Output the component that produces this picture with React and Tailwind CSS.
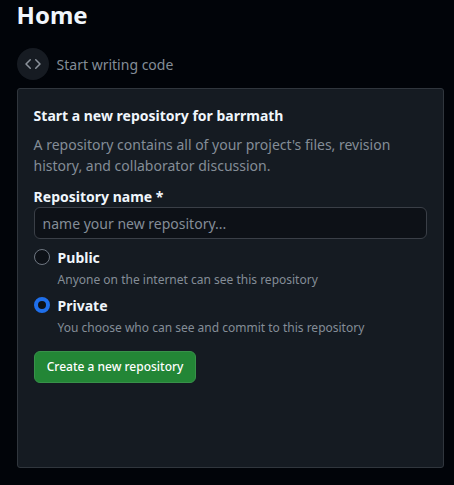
function Option({ title, note, checked }) {
  return (
    <label className="flex h-12">
      <span className={"mt-[2px] size-4 shrink-0 rounded-full bg-[#0d1117] " + (checked ? "border-[4px] border-[#1f6feb]" : "border border-[#6e7681]")} />
      <span className="ml-2 flex flex-col">
        <span className="text-[14px] leading-[21px] font-bold text-[#f0f6fc]">{title}</span>
        <span className="mt-px text-[12px] leading-[21px] text-[#848d97]">{note}</span>
      </span>
    </label>
  );
}

export default function App() {
  return (
    <main className="h-[485px] w-[454px] bg-[#010409] font-['Noto_Sans',sans-serif]">
      <h1 className="h-12 pl-[16.6px] text-[24px] leading-[30px] font-bold text-[#f0f6fc]">Home</h1>
      <div className="flex h-8 items-center pl-[16.6px]">
        <span className="flex size-8 items-center justify-center rounded-full bg-[#161b22] text-[#8b929b]">
          <svg width="16" height="16" viewBox="0 0 16 16" fill="currentColor">
            <path d="m11.28 3.22 4.25 4.25a.75.75 0 0 1 0 1.06l-4.25 4.25a.749.749 0 0 1-1.06-1.06L13.94 8l-3.72-3.72a.749.749 0 0 1 1.06-1.06Zm-6.56 0a.751.751 0 0 1 1.06 1.06L2.06 8l3.72 3.72a.749.749 0 0 1-1.06 1.06L.47 8.53a.75.75 0 0 1 0-1.06Z" />
          </svg>
        </span>
        <span className="ml-2 text-[14px] leading-[21px] text-[#848d97]">Start writing code</span>
      </div>
      <section className="mt-2 ml-[16.6px] flex h-[380px] w-[427px] flex-col rounded-[3px] border border-[#30363d] bg-[#151b22] px-4 pt-4">
        <h2 className="text-[14px] leading-[21px] font-bold text-[#f0f6fc]">Start a new repository for barrmath</h2>
        <p className="mt-2 text-[14px] leading-[21px] whitespace-nowrap text-[#848d97]">A repository contains all of your project's files, revision<br />history, and collaborator discussion.</p>
        <div className="mt-[10px] text-[14px] leading-[21px] font-bold text-[#f0f6fc]">Repository name *</div>
        <div className="flex h-8 shrink-0 items-center rounded-md border border-[#3a3f47] bg-[#0d1117] px-2 text-[14px] text-[#848d97]">name your new repository...</div>
        <div className="mt-2 flex flex-col">
          <Option title="Public" note="Anyone on the internet can see this repository" />
          <Option title="Private" note="You choose who can see and commit to this repository" checked />
        </div>
        <button className="mt-2 flex h-8 w-[162px] items-center justify-center rounded-md border border-[#38914a] bg-[#238636] pl-px text-[12px] font-medium text-white">Create a new repository</button>
      </section>
    </main>
  );
}
